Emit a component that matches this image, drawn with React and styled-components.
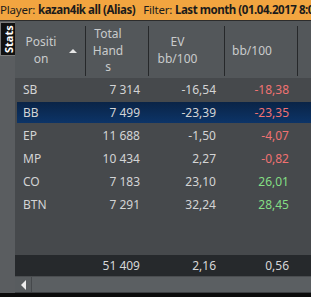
import styled, { createGlobalStyle } from "styled-components";

const GlobalStyle = createGlobalStyle`
  html, body {
    margin: 0;
    padding: 0;
    background: #000;
  }
  * {
    box-sizing: border-box;
  }
`;

const Screen = styled.div`
  width: 311px;
  height: 297px;
  overflow: hidden;
  display: flex;
  flex-direction: column;
  background: #0b0b0b;
  font-family: "Noto Sans", "Open Sans", sans-serif;
  font-size: 12px;
`;

const TopBar = styled.div`
  height: 21px;
  flex-shrink: 0;
  background: #f2a540;
  border-bottom: 1px solid #2c2c2c;
  color: #1b1b1b;
  white-space: nowrap;
  overflow: hidden;
  font-size: 11.5px;
  line-height: 19px;
  padding-left: 0;
`;

const Label = styled.span`
  font-weight: 400;
  letter-spacing: -0.2px;
`;

const Value = styled.span`
  font-weight: 700;
  letter-spacing: -0.45px;
  margin-right: 8px;
`;

const Main = styled.div`
  flex: 1;
  display: flex;
  min-height: 0;
`;

const SideStrip = styled.div`
  width: 15px;
  flex-shrink: 0;
  background: #5a5d60;
  padding-top: 1px;
`;

const SideTab = styled.div`
  width: 15px;
  height: 34px;
  background: #111;
  border: 1px solid #7c7c7c;
  border-left: none;
  color: #fff;
  font-weight: 700;
  font-size: 11px;
  writing-mode: vertical-rl;
  transform: rotate(180deg);
  display: flex;
  align-items: center;
  justify-content: center;
  line-height: 13px;
`;

const Panel = styled.div`
  flex: 1;
  display: flex;
  flex-direction: column;
  background: #46494c;
  min-width: 0;
  overflow: hidden;
`;

const HeaderRow = styled.div`
  height: 57px;
  flex-shrink: 0;
  background: #53575a;
  display: grid;
  grid-template-columns: 71px 63px 76px 73px 120px;
  align-items: stretch;
`;

const HeaderCell = styled.div`
  margin: 5px 0 4px;
  border-right: ${(p) => (p.$last ? "none" : "1px solid #26282a")};
  display: flex;
  align-items: center;
  color: #c9cbcc;
  line-height: 16.5px;
  padding-left: ${(p) => (p.$last ? "13px" : "0")};
`;

const HeaderLabel = styled.div`
  flex: 1;
  text-align: ${(p) => (p.$last ? "left" : "center")};
  white-space: nowrap;
`;

const SortSlot = styled.div`
  width: 18px;
  flex-shrink: 0;
  display: flex;
  align-items: center;
  padding-left: 2px;
  margin-top: 1px;
`;

const SortArrow = styled.div`
  width: 0;
  height: 0;
  border-left: 4px solid transparent;
  border-right: 4px solid transparent;
  border-bottom: 4px solid #e6e6e6;
  visibility: ${(p) => (p.$show ? "visible" : "hidden")};
`;

const Rows = styled.div`
  flex: 1;
  display: flex;
  flex-direction: column;
`;

const Row = styled.div`
  height: 23px;
  display: grid;
  grid-template-columns: 69px 63px 76px 73px 120px;
  align-items: center;
  border-style: solid;
  border-color: transparent;
  border-width: 1px 0 1px 2px;
  background: ${(p) =>
    p.$selected
      ? "linear-gradient(to bottom, #0a2447 0%, #0c3467 100%) padding-box"
      : "transparent"};
  color: #d3d4d5;
`;

const Cell = styled.div`
  padding: ${(p) => (p.$left ? "0 0 0 6px" : "0 9px 0 0")};
  text-align: ${(p) => (p.$left ? "left" : "right")};
  color: ${(p) =>
    p.$tone === "neg" ? "#f07272" : p.$tone === "pos" ? "#84de84" : "inherit"};
  white-space: nowrap;
`;

const Footer = styled.div`
  height: 21px;
  flex-shrink: 0;
  background: #26292c;
  display: grid;
  grid-template-columns: 71px 63px 76px 73px 120px;
  align-items: center;
  color: #d6d7d8;
`;

const ScrollBar = styled.div`
  height: 17px;
  flex-shrink: 0;
  display: flex;
  background: #585c5f;
  border-top: 1px solid #4a4d50;
  border-bottom: 1px solid #3c3f42;
`;

const ScrollButton = styled.div`
  width: 17px;
  border-right: 1px solid #45484b;
  display: flex;
  align-items: center;
  justify-content: center;
`;

const LeftArrow = styled.div`
  width: 0;
  height: 0;
  border-top: 5px solid transparent;
  border-bottom: 5px solid transparent;
  border-right: 5px solid #ececec;
`;

const ScrollTrack = styled.div`
  flex: 1;
  background: #5b5f62;
`;

const BottomEdge = styled.div`
  height: 4px;
  flex-shrink: 0;
  background: #0b0b0b;
`;

const columns = [
  { label: ["Positi", "on"], sort: true },
  { label: ["Total", "Hand", "s"] },
  { label: ["EV", "bb/100"] },
  { label: ["bb/100"] },
];

const rows = [
  { pos: "SB", hands: "7 314", ev: "-16,54", bb: "-18,38", tone: "neg" },
  { pos: "BB", hands: "7 499", ev: "-23,39", bb: "-23,35", tone: "neg", selected: true },
  { pos: "EP", hands: "11 688", ev: "-1,50", bb: "-4,07", tone: "neg" },
  { pos: "MP", hands: "10 434", ev: "2,27", bb: "-0,82", tone: "neg" },
  { pos: "CO", hands: "7 183", ev: "23,10", bb: "26,01", tone: "pos" },
  { pos: "BTN", hands: "7 291", ev: "32,24", bb: "28,45", tone: "pos" },
];

const App = () => {
  return (
    <Screen>
      <GlobalStyle />
      <TopBar>
        <Label>Player: </Label>
        <Value>kazan4ik all (Alias)</Value>
        <Label>Filter: </Label>
        <Value>Last month (01.04.2017 8:00 - 30.04.2017)</Value>
      </TopBar>
      <Main>
        <SideStrip>
          <SideTab>Stats</SideTab>
        </SideStrip>
        <Panel>
          <HeaderRow>
            {columns.map((col, i) => (
              <HeaderCell key={i}>
                <HeaderLabel>
                  {col.label.map((line, j) => (
                    <div key={j}>{line}</div>
                  ))}
                </HeaderLabel>
                <SortSlot>
                  <SortArrow $show={col.sort} />
                </SortSlot>
              </HeaderCell>
            ))}
            <HeaderCell $last>
              <HeaderLabel $last>
                <div>&nbsp;</div>
                <div>VPIP</div>
              </HeaderLabel>
            </HeaderCell>
          </HeaderRow>
          <Rows>
            {rows.map((r) => (
              <Row key={r.pos} $selected={r.selected}>
                <Cell $left>{r.pos}</Cell>
                <Cell>{r.hands}</Cell>
                <Cell>{r.ev}</Cell>
                <Cell $tone={r.tone}>{r.bb}</Cell>
                <Cell />
              </Row>
            ))}
          </Rows>
          <Footer>
            <Cell />
            <Cell>51 409</Cell>
            <Cell>2,16</Cell>
            <Cell>0,56</Cell>
            <Cell />
          </Footer>
          <ScrollBar>
            <ScrollButton>
              <LeftArrow />
            </ScrollButton>
            <ScrollTrack />
          </ScrollBar>
        </Panel>
      </Main>
      <BottomEdge />
    </Screen>
  );
};

export default App;
